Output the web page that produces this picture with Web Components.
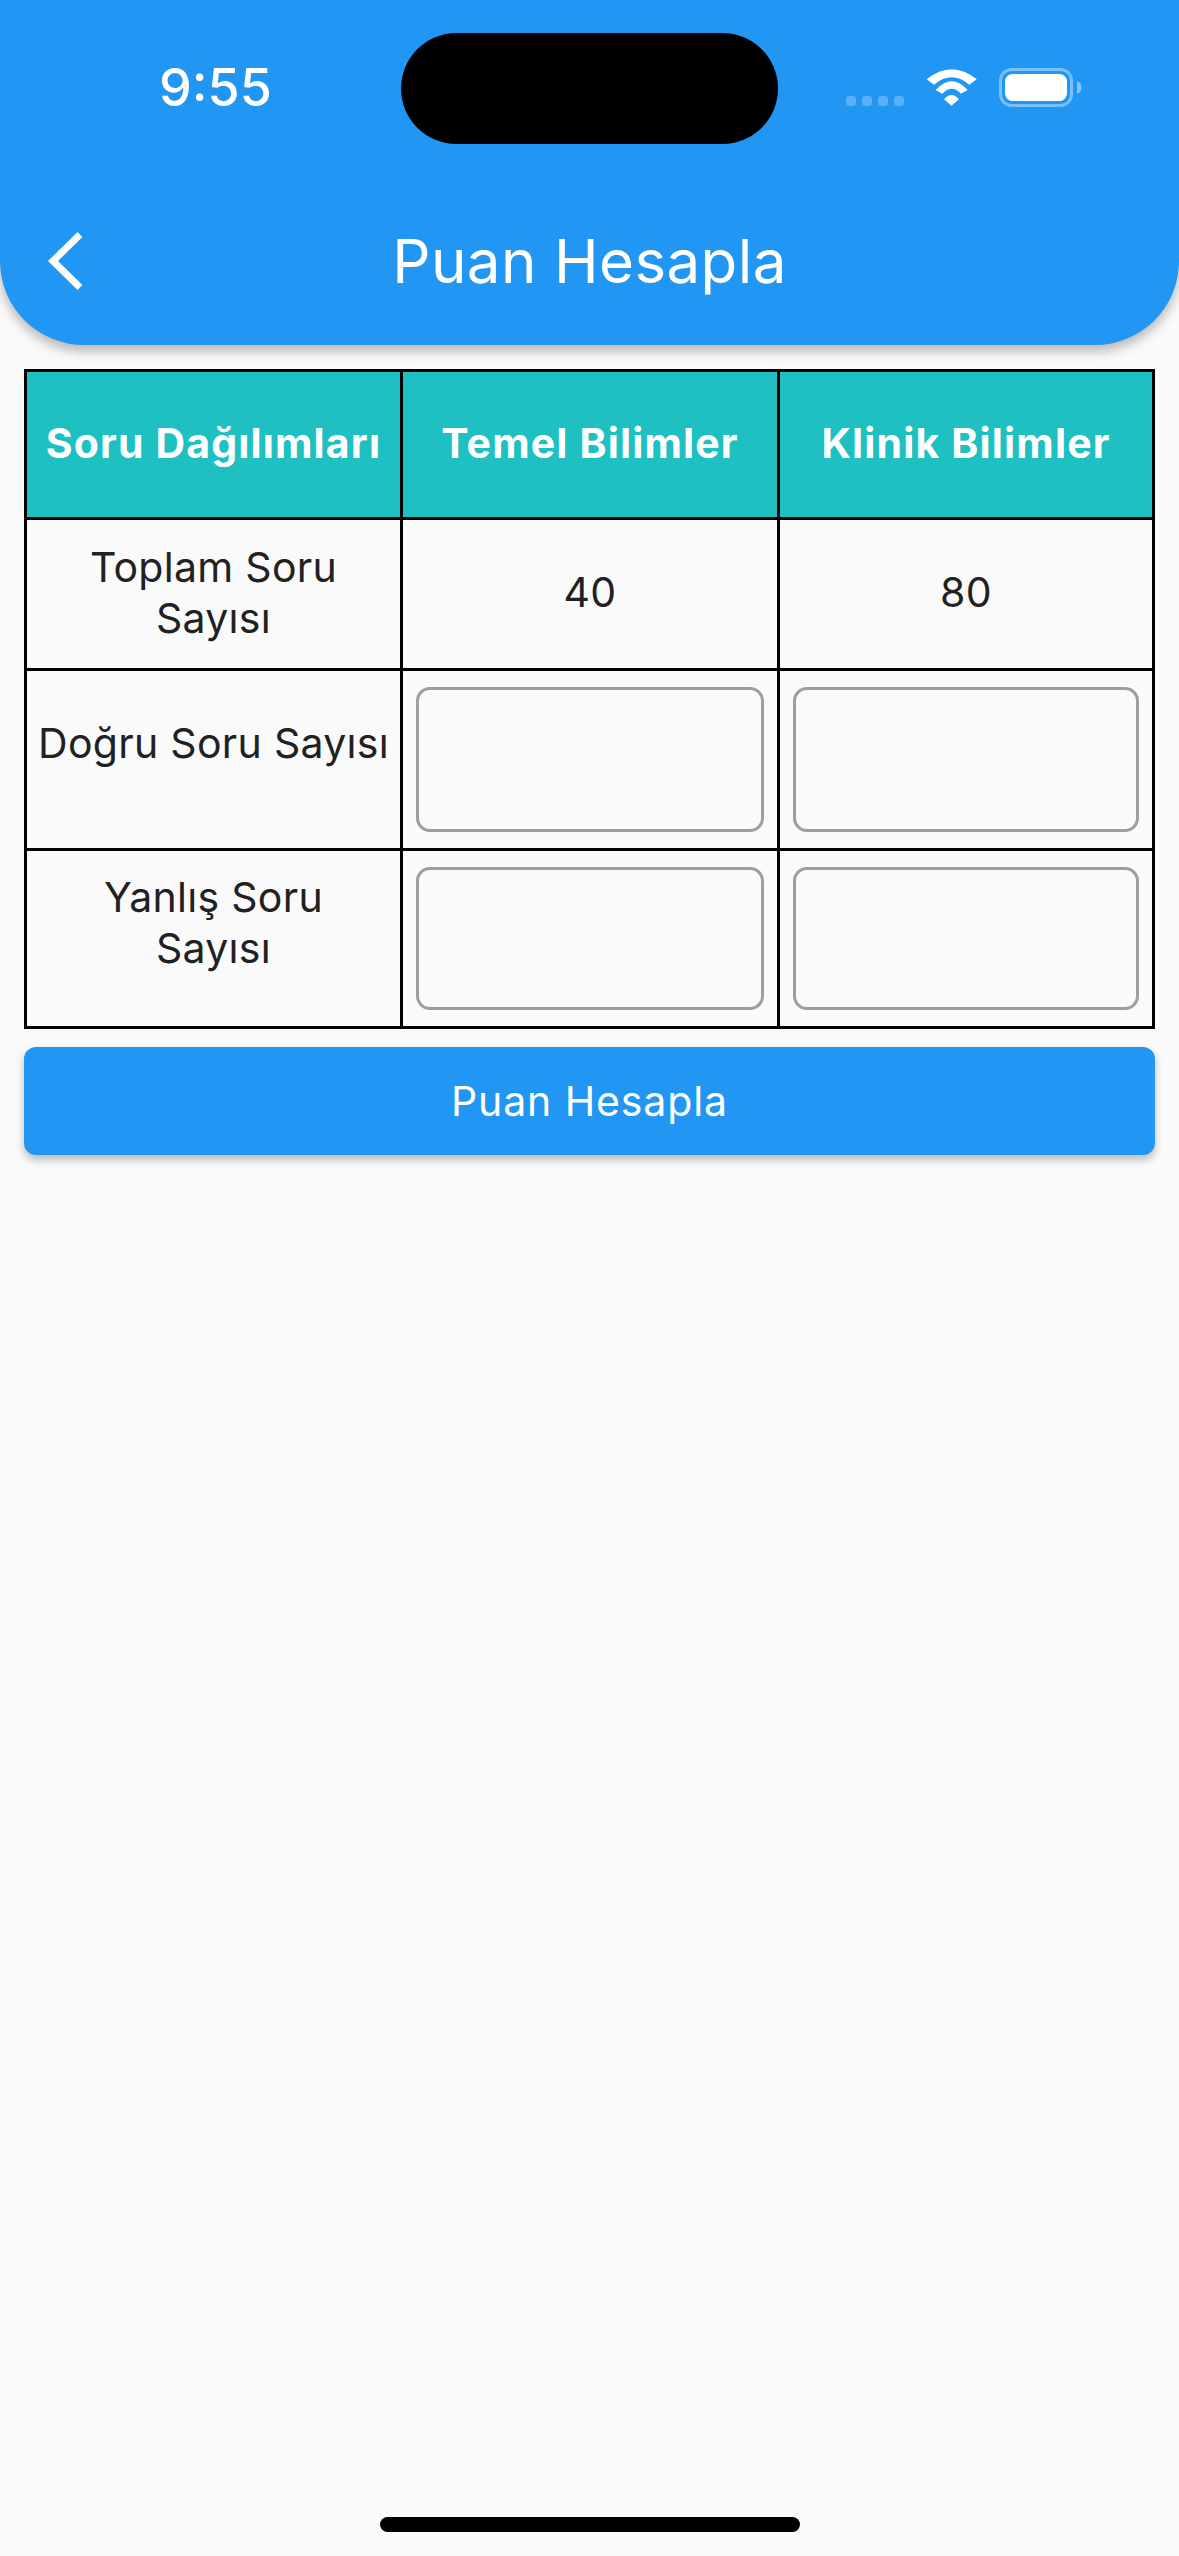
<!DOCTYPE html>
<html lang="tr">
<head>
<meta charset="utf-8">
<title>Puan Hesapla</title>
<style>
  html, body { margin: 0; height: 100%; background: #fafafa; }
  body { font-family: Inter, "Noto Sans", sans-serif; }
</style>
</head>
<body>
<puan-screen>
  <app-header title="Puan Hesapla" slot="header"></app-header>
  <score-table>
    <table-cell head>Soru Dağılımları</table-cell>
    <table-cell head>Temel Bilimler</table-cell>
    <table-cell head>Klinik Bilimler</table-cell>
    <table-cell>Toplam Soru Sayısı</table-cell>
    <table-cell>40</table-cell>
    <table-cell>80</table-cell>
    <table-cell raised>Doğru Soru Sayısı</table-cell>
    <table-cell field><score-input></score-input></table-cell>
    <table-cell field><score-input></score-input></table-cell>
    <table-cell raised>Yanlış Soru<br>Sayısı</table-cell>
    <table-cell field><score-input></score-input></table-cell>
    <table-cell field><score-input></score-input></table-cell>
  </score-table>
  <action-button>Puan Hesapla</action-button>
</puan-screen>

<script>
class PuanScreen extends HTMLElement {
  constructor() {
    super();
    this.shadowDOM = this.attachShadow({mode: 'open'});
    this.shadowDOM.innerHTML = `
    <style>
      :host { display: flex; flex-direction: column; height: 2556px; position: relative; background: #fafafa; }
      .content { display: flex; flex-direction: column; gap: 18px; padding: 24px 24px 0; }
      .home { position: absolute; left: 380px; bottom: 24px; width: 420px; height: 15px; border-radius: 8px; background: #000; }
    </style>
    <slot name="header"></slot>
    <div class="content"><slot></slot></div>
    <div class="home"></div>
    `;
  }
}

class AppHeader extends HTMLElement {
  constructor() {
    super();
    this.shadowDOM = this.attachShadow({mode: 'open'});
  }
  connectedCallback() {
    this.shadowDOM.innerHTML = `
    <style>
      :host { display: block; background: #2196f3; color: #fff; border-radius: 0 0 84px 84px;
        box-shadow: 0 6px 12px rgba(0,0,0,.28); position: relative; z-index: 1; }
      .status { display: grid; grid-template-columns: 401px 377px 1fr; height: 177px; }
      .time { font-size: 52px; font-weight: 500; line-height: 62px; text-align: center; padding: 57px 0 0 30px; box-sizing: border-box; }
      .island { width: 377px; height: 111px; margin-top: 33px; background: #000; border-radius: 56px; }
      .icons { position: relative; }
      .icons svg { position: absolute; left: 68px; top: 66px; }
      .bar { height: 168px; display: flex; align-items: center; position: relative; }
      .back { position: absolute; left: 40px; top: 47px; }
      h1 { flex: 1; margin: 0; font-size: 60px; font-weight: 400; letter-spacing: .4px; text-align: center; }
    </style>
    <div class="status">
      <div class="time">9:55</div>
      <div class="island"></div>
      <div class="icons">
        <svg width="240" height="44" viewBox="0 0 240 44" fill="none">
          <g fill="#fff" fill-opacity=".25">
            <rect x="0" y="30" width="10" height="10" rx="3"/>
            <rect x="16" y="30" width="10" height="10" rx="3"/>
            <rect x="32" y="30" width="10" height="10" rx="3"/>
            <rect x="48" y="30" width="10" height="10" rx="3"/>
          </g>
          <path fill="#fff" d="M80.700 13.300 Q105.700 -6.700 130.700 13.300 L123.300 18.700 Q105.700 3.900 88 18.700Z M89.700 24 Q105.700 6.600 121.700 24 L115 27.700 Q105.700 17.700 96.300 27.700Z M98 33.300 Q105.500 24.700 113 33.300 L105.500 39.700Z"/>
          <rect x="154.500" y="3.500" width="71" height="36" rx="11" stroke="#fff" stroke-opacity=".4" stroke-width="3"/>
          <rect x="159" y="8" width="62" height="27" rx="7.500" fill="#fff"/>
          <path fill="#fff" fill-opacity=".45" d="M231 15 C234.500 16.500 235.500 19 235.500 21.500 C235.500 24 234.500 26.500 231 28Z"/>
        </svg>
      </div>
    </div>
    <div class="bar">
      <svg class="back" width="50" height="74" viewBox="0 0 50 74" fill="none">
        <path d="M40 10.500 L13 37 L40 63.500" stroke="#fff" stroke-width="7"/>
      </svg>
      <h1>${this.getAttribute('title')}</h1>
    </div>
    `;
  }
}

class ScoreTable extends HTMLElement {
  constructor() {
    super();
    this.shadowDOM = this.attachShadow({mode: 'open'});
    this.shadowDOM.innerHTML = `
    <style>
      :host { display: grid; grid-template-columns: 373px 374px 372px; grid-template-rows: 145px 148px 177px 175px;
        gap: 3px; background: #000; border: 3px solid #000; }
    </style>
    <slot></slot>
    `;
  }
}

class TableCell extends HTMLElement {
  constructor() {
    super();
    this.shadowDOM = this.attachShadow({mode: 'open'});
    this.shadowDOM.innerHTML = `
    <style>
      :host { display: flex; align-items: center; justify-content: center; text-align: center; box-sizing: border-box; min-width: 0;
        background: #fafafa; color: #212121; font-size: 41px; line-height: 51px; padding: 0 6px 3px; letter-spacing: .3px; }
      :host([head]) { background: #1ec0c2; color: #fff; font-weight: 700; letter-spacing: 1.15px; }
      :host([field]) { padding: 16px 13px; align-items: stretch; }
      :host([raised]) { padding-bottom: 32px; }
      :host([field]) .inner { display: flex; flex: 1; min-width: 0; }
    </style>
    <div class="inner"><slot></slot></div>
    `;
  }
}

class ScoreInput extends HTMLElement {
  constructor() {
    super();
    this.shadowDOM = this.attachShadow({mode: 'open'});
    this.shadowDOM.innerHTML = `
    <style>
      :host { display: flex; flex: 1; min-width: 0; }
      input { display: block; flex: 1; width: 100%; min-width: 0; box-sizing: border-box; margin: 0; padding: 0 36px;
        background: transparent; border: 3px solid #9e9e9e; border-radius: 14px; font: inherit; outline: none; }
    </style>
    <input type="text" inputmode="numeric">
    `;
  }
}

class ActionButton extends HTMLElement {
  constructor() {
    super();
    this.shadowDOM = this.attachShadow({mode: 'open'});
    this.shadowDOM.innerHTML = `
    <style>
      :host { display: block; }
      button { display: block; width: 100%; height: 108px; border: 0; border-radius: 12px; background: #2196f3; color: #fff;
        font-family: inherit; font-size: 41px; letter-spacing: .9px; box-shadow: 0 5px 8px rgba(0,0,0,.25); padding: 0; }
    </style>
    <button type="button"><slot></slot></button>
    `;
  }
}

customElements.define('puan-screen', PuanScreen);
customElements.define('app-header', AppHeader);
customElements.define('score-table', ScoreTable);
customElements.define('table-cell', TableCell);
customElements.define('score-input', ScoreInput);
customElements.define('action-button', ActionButton);
</script>
</body>
</html>
